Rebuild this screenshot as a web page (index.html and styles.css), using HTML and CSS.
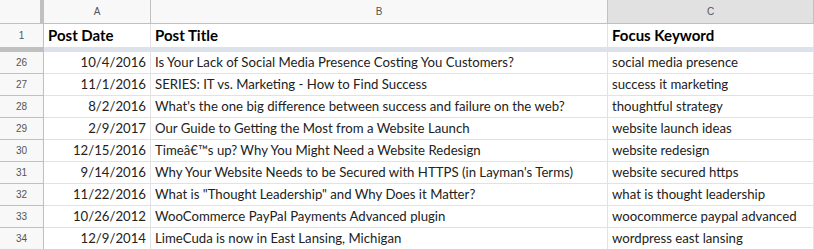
FILE: index.html
```html
<!DOCTYPE html>
<html lang="en">
<head>
  <meta charset="UTF-8">
  <title>Posts sheet</title>
  <link rel="stylesheet" href="styles.css">
</head>
<body>

<div class="sheet">
  <div class="corner"></div>
  <div class="col-head">A</div>
  <div class="col-head">B</div>
  <div class="col-head active">C</div>

  <div class="row-num first">1</div>
  <div class="cell head">Post Date</div>
  <div class="cell head">Post Title</div>
  <div class="cell head">Focus Keyword</div>

  <div class="freeze num"></div>
  <div class="freeze"></div>
  <div class="freeze"></div>
  <div class="freeze"></div>

  <div class="row-num">26</div>
  <div class="cell date">10/4/2016</div>
  <div class="cell">Is Your Lack of Social Media Presence Costing You Customers?</div>
  <div class="cell">social media presence</div>

  <div class="row-num">27</div>
  <div class="cell date">11/1/2016</div>
  <div class="cell">SERIES: IT vs. Marketing - How to Find Success</div>
  <div class="cell">success it marketing</div>

  <div class="row-num">28</div>
  <div class="cell date">8/2/2016</div>
  <div class="cell">What's the one big difference between success and failure on the web?</div>
  <div class="cell">thoughtful strategy</div>

  <div class="row-num">29</div>
  <div class="cell date">2/9/2017</div>
  <div class="cell">Our Guide to Getting the Most from a Website Launch</div>
  <div class="cell">website launch ideas</div>

  <div class="row-num">30</div>
  <div class="cell date">12/15/2016</div>
  <div class="cell">Timeâ€™s up? Why You Might Need a Website Redesign</div>
  <div class="cell">website redesign</div>

  <div class="row-num">31</div>
  <div class="cell date">9/14/2016</div>
  <div class="cell">Why Your Website Needs to be Secured with HTTPS (in Layman's Terms)</div>
  <div class="cell">website secured https</div>

  <div class="row-num">32</div>
  <div class="cell date">11/22/2016</div>
  <div class="cell">What is "Thought Leadership" and Why Does it Matter?</div>
  <div class="cell">what is thought leadership</div>

  <div class="row-num">33</div>
  <div class="cell date">10/26/2012</div>
  <div class="cell">WooCommerce PayPal Payments Advanced plugin</div>
  <div class="cell">woocommerce paypal advanced</div>

  <div class="row-num">34</div>
  <div class="cell date">12/9/2014</div>
  <div class="cell">LimeCuda is now in East Lansing, Michigan</div>
  <div class="cell">wordpress east lansing</div>
</div>

</body>
</html>
```

FILE: styles.css
```css
body {
  margin: 0;
  background-color: #fff;
  font-family: Lato, 'Open Sans', sans-serif;
  overflow: hidden;
}
.sheet {
  display: grid;
  grid-template-columns: 44px 107px 457px 1fr;
  grid-template-rows: 24px 23px 5px repeat(9, 22px);
  width: 814px;
}
.sheet > div {
  box-sizing: border-box;
  white-space: nowrap;
  overflow: hidden;
}
.corner {
  background-color: #f8f8f8;
  border-right: 4px solid #c0c0c0;
  border-bottom: 1px solid #c0c0c0;
}
.col-head {
  background-color: #f8f8f8;
  color: #555;
  font-family: 'Liberation Sans', Arial, sans-serif;
  font-size: 10px;
  text-align: center;
  line-height: 23px;
  border-right: 1px solid #c0c0c0;
  border-bottom: 1px solid #c0c0c0;
}
.col-head.active {
  background-color: #e1e1e1;
}
.row-num {
  background-color: #f8f8f8;
  color: #555;
  font-family: 'Liberation Sans', Arial, sans-serif;
  font-size: 10px;
  text-align: center;
  line-height: 21px;
  border-right: 1px solid #c0c0c0;
  border-bottom: 1px solid #c0c0c0;
}
.row-num.first {
  line-height: 23px;
  border-bottom: none;
}
.cell {
  color: #222;
  font-size: 13.2px;
  line-height: 21px;
  padding: 0 4px;
  border-right: 1px solid #e2e2e2;
  border-bottom: 1px solid #e2e2e2;
}
.cell.head {
  color: #000;
  font-weight: bold;
  font-size: 15px;
  line-height: 23px;
  border-bottom: none;
}
.cell.date {
  text-align: right;
}
.freeze {
  background-color: #dde2ea;
}
.freeze.num {
  background-color: #c0c0c0;
}
```
